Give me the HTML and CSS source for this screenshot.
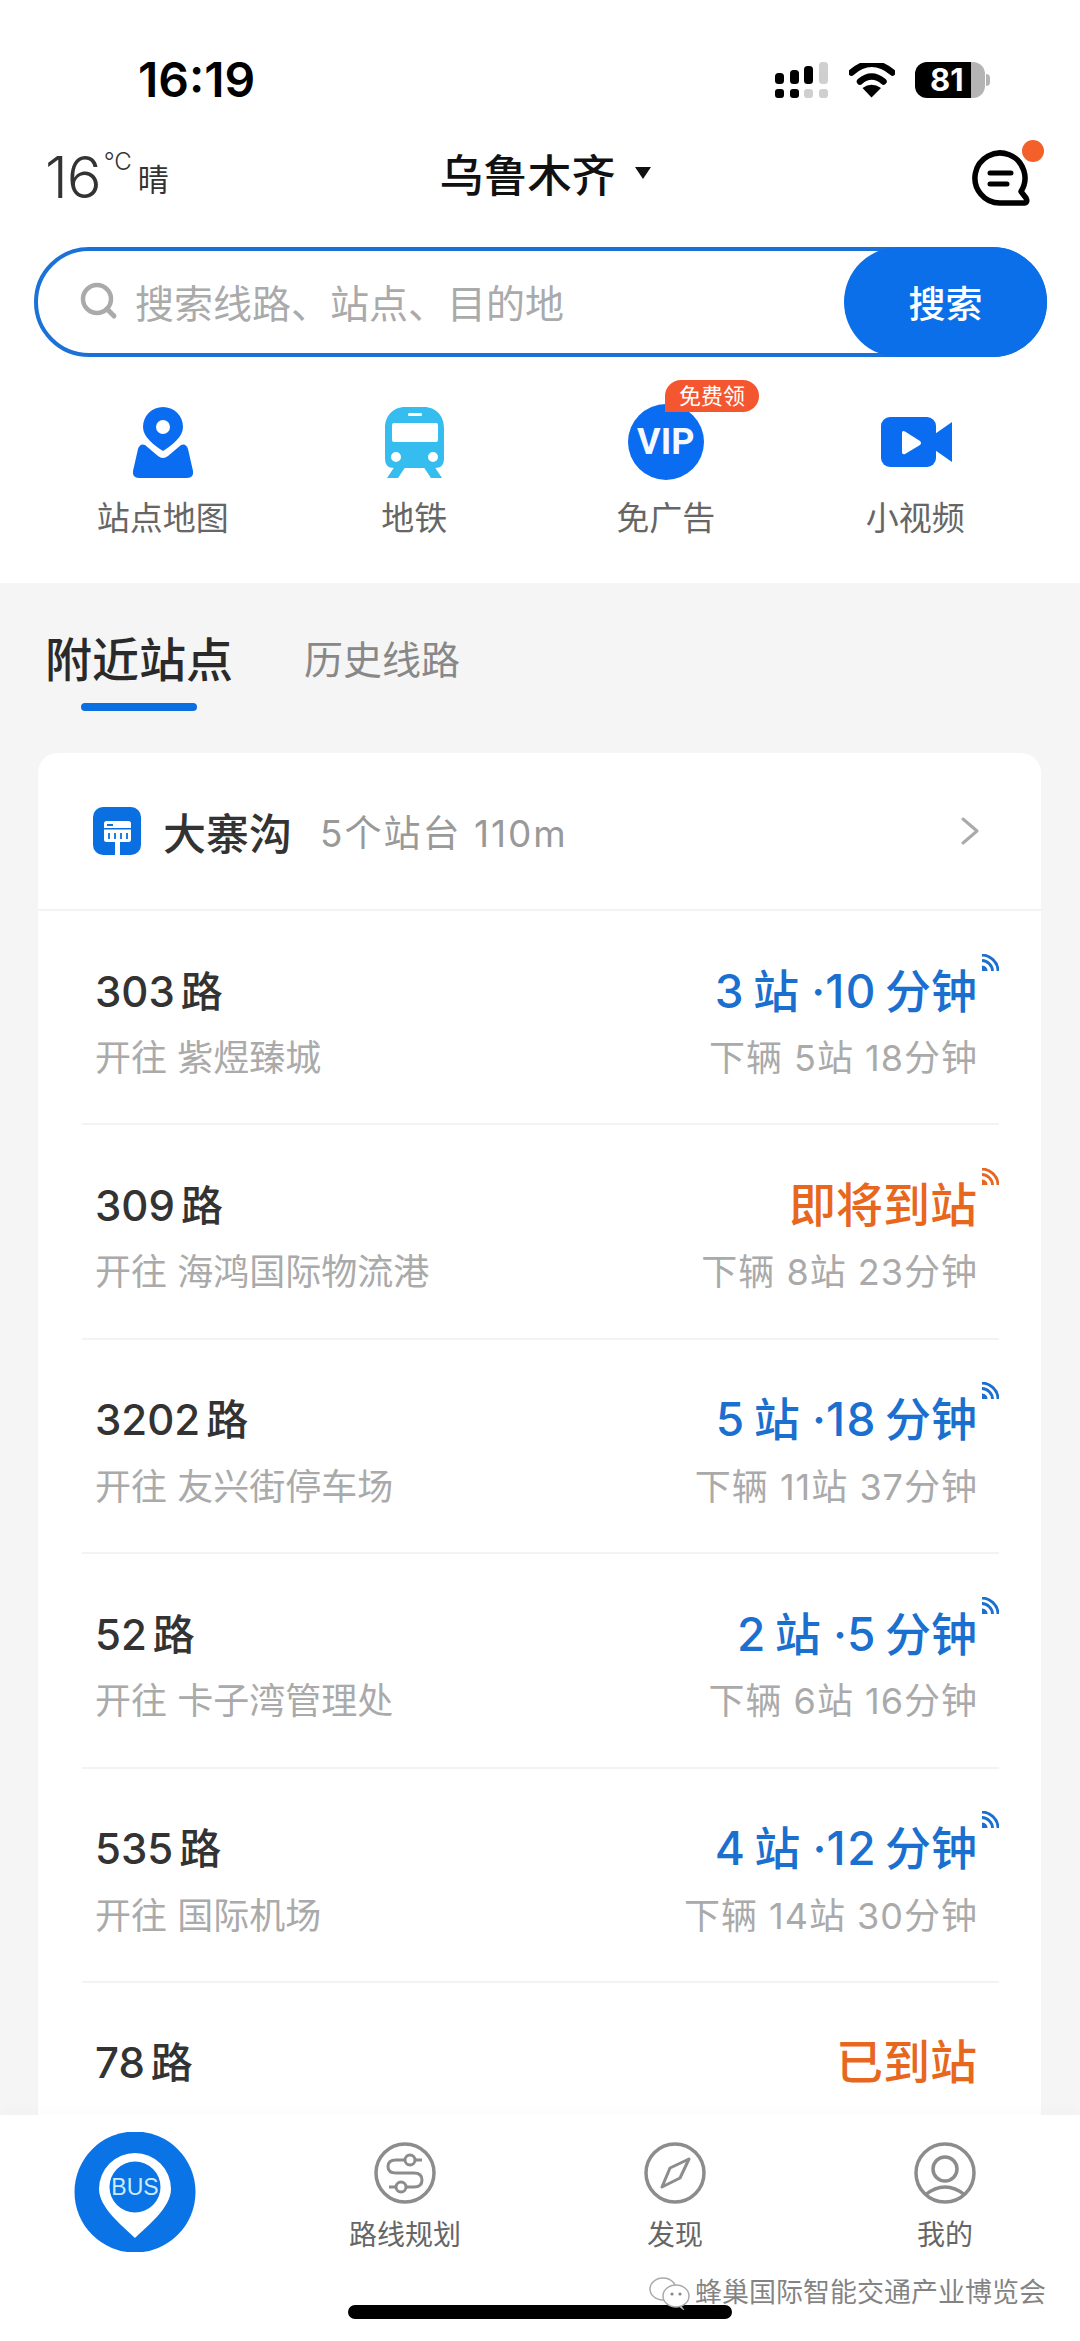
FILE: index.html
```html
<!DOCTYPE html>
<html lang="zh-CN">
<head>
<meta charset="utf-8">
<title>公交</title>
<link rel="stylesheet" href="styles.css">
</head>
<body>
<div class="screen">
  <div class="status">
    <span class="time">16:19</span>
    <div class="status-icons">
      <svg class="sig" viewBox="775 61 54 38" width="54" height="38">
        <g fill="#000">
          <rect x="775" y="73" width="9" height="11" rx="3.5"/><rect x="790" y="70" width="9" height="14" rx="3.5"/><rect x="804" y="66" width="9" height="18" rx="3.5"/>
          <rect x="775" y="89" width="9" height="9" rx="3"/><rect x="790" y="89" width="9" height="9" rx="3"/>
        </g>
        <g fill="#cfcfcf">
          <rect x="819" y="62" width="9" height="22" rx="3.5"/><rect x="804" y="89" width="9" height="9" rx="3"/><rect x="819" y="89" width="9" height="9" rx="3"/>
        </g>
      </svg>
      <svg class="wifi" viewBox="849 63 46 35" width="46" height="35">
        <path d="M851.500 72.500Q871.500 55 892.500 72.500M860 81.500Q871.500 71.500 883.500 81.500" fill="none" stroke="#000" stroke-width="6.500" stroke-linecap="round"/>
        <path d="M871.500 97.500L862.500 88Q871.500 81.500 881 88Z" fill="#000"/>
      </svg>
      <div class="battery"><span class="batt-num">81</span></div>
    </div>
  </div>

  <div class="topbar">
    <div class="weather"><span class="temp">16</span><span class="deg">°C</span><span class="sky">晴</span></div>
    <div class="city"><span>乌鲁木齐</span><i class="caret"></i></div>
    <div class="msg">
      <svg viewBox="970 136 75 70" width="75" height="70">
        <path d="M1000 200A25 25 0 1 1 1021 188.500L1026 195Q1028.500 200 1023 200Z" fill="none" stroke="#000" stroke-width="5.500" stroke-linejoin="round"/>
        <path d="M990 170H1011M990 181H1007" stroke="#000" stroke-width="5" stroke-linecap="round"/>
        <circle cx="1033" cy="148" r="11" fill="#f4602a"/>
      </svg>
    </div>
  </div>

  <div class="search">
    <div class="search-field">
      <svg viewBox="0 0 40 40" width="40" height="40">
        <circle cx="18" cy="18" r="14" fill="none" stroke="#aaa" stroke-width="4.500"/>
        <path d="M28 28L35 35" stroke="#aaa" stroke-width="5" stroke-linecap="round"/>
      </svg>
      <span>搜索线路、站点、目的地</span>
    </div>
    <div class="search-btn">搜索</div>
  </div>

  <div class="nav">
    <div class="nav-item">
      <svg viewBox="123 404 80 80" width="80" height="80">
        <path fill="#0a6cf0" fill-rule="evenodd" d="M163 407A20 20 0 0 1 183 427C183 437 172 445 163 451C154 445 143 437 143 427A20 20 0 0 1 163 407ZM163 420A7 7 0 1 0 163 434A7 7 0 1 0 163 420Z"/>
        <path fill="#0a6cf0" d="M145 445L158 456Q163 460 168 456L181 445Q186 443 188 449L193 471Q194 478 187 478H139Q132 478 133 471L138 449Q140 443 145 445Z"/>
      </svg>
      <span class="nav-label">站点地图</span>
    </div>
    <div class="nav-item">
      <svg viewBox="373 404 80 80" width="80" height="80">
        <path fill="#35bdf0" fill-rule="evenodd" d="M404 407H423C435 407 443 416 443 428V459Q443 468 434 468H393Q384 468 384 459V428C384 416 392 407 404 407ZM393 423Q391 423 391 425V440Q391 442 393 442H435Q437 442 437 440V425Q437 423 435 423ZM408 413Q407 413 407 414.500Q407 416 408 416H420Q421 416 421 414.500Q421 413 420 413ZM395 452A5 5 0 1 0 395 462A5 5 0 1 0 395 452ZM432 452A5 5 0 1 0 432 462A5 5 0 1 0 432 452Z"/>
        <path fill="#35bdf0" d="M394 466H405L397 478H386ZM433 466H422L430 478H441Z"/>
      </svg>
      <span class="nav-label">地铁</span>
    </div>
    <div class="nav-item">
      <div class="vip">VIP</div>
      <span class="badge">免费领</span>
      <span class="nav-label">免广告</span>
    </div>
    <div class="nav-item">
      <svg viewBox="877 404 80 80" width="80" height="80">
        <rect x="881" y="417" width="55" height="50" rx="9" fill="#0a6cf0"/>
        <path d="M932 436L952 422V462L932 448Z" fill="#0a6cf0"/>
        <path d="M902 433Q902 430 905 431.500L920 441Q922 443 920 445L905 454Q902 455 902 452Z" fill="#fff"/>
      </svg>
      <span class="nav-label nudge">小视频</span>
    </div>
  </div>

  <div class="main">
    <div class="tabs">
      <div class="tab active">附近站点</div>
      <div class="tab">历史线路</div>
    </div>

    <div class="card">
      <div class="stop-head">
        <svg viewBox="93 808 48 48" width="48" height="48">
          <rect x="93" y="808" width="48" height="48" rx="10" fill="#0a6fe0"/>
          <rect x="104" y="822" width="27" height="21" rx="2.500" fill="#fff"/>
          <rect x="115" y="843" width="5" height="13" fill="#fff"/>
          <rect x="104" y="829" width="27" height="1.500" fill="#0a6fe0"/>
          <rect x="107" y="825" width="6" height="2" fill="#0a6fe0"/>
          <path d="M109 834V840M115 834V840M121 834V840M127 834V840" stroke="#0a6fe0" stroke-width="1.800"/>
        </svg>
        <span class="stop-name">大寨沟</span>
        <span class="stop-meta">5个站台 110m</span>
        <svg class="chev" viewBox="0 0 20 30" width="20" height="30">
          <path d="M3 3L17 15L3 27" fill="none" stroke="#aaa" stroke-width="3" stroke-linecap="round" stroke-linejoin="round"/>
        </svg>
      </div>

      <div class="row">
        <div class="line-main">
          <span class="route"><span class="n">303</span>路</span>
          <span class="eta blue"><span class="n">3</span>站 <span class="dot">·</span><span class="n">10</span>分钟<svg class="rss" viewBox="0 0 18 18" width="18" height="18"><path d="M1 1C9 1 17 8 17 17M1 6.500C6.500 6.500 11.500 11.500 11.500 17" fill="none" stroke="currentColor" stroke-width="2.800"/><path d="M1 11.500Q6.500 12 6.500 17H1Z" fill="currentColor"/></svg></span>
        </div>
        <div class="line-sub"><span>开往 紫煜臻城</span><span class="next">下辆 5站 18分钟</span></div>
      </div>
      <div class="row">
        <div class="line-main">
          <span class="route"><span class="n">309</span>路</span>
          <span class="eta orange">即将到站<svg class="rss" viewBox="0 0 18 18" width="18" height="18"><path d="M1 1C9 1 17 8 17 17M1 6.500C6.500 6.500 11.500 11.500 11.500 17" fill="none" stroke="currentColor" stroke-width="2.800"/><path d="M1 11.500Q6.500 12 6.500 17H1Z" fill="currentColor"/></svg></span>
        </div>
        <div class="line-sub"><span>开往 海鸿国际物流港</span><span class="next">下辆 8站 23分钟</span></div>
      </div>
      <div class="row">
        <div class="line-main">
          <span class="route"><span class="n">3202</span>路</span>
          <span class="eta blue"><span class="n">5</span>站 <span class="dot">·</span><span class="n">18</span>分钟<svg class="rss" viewBox="0 0 18 18" width="18" height="18"><path d="M1 1C9 1 17 8 17 17M1 6.500C6.500 6.500 11.500 11.500 11.500 17" fill="none" stroke="currentColor" stroke-width="2.800"/><path d="M1 11.500Q6.500 12 6.500 17H1Z" fill="currentColor"/></svg></span>
        </div>
        <div class="line-sub"><span>开往 友兴街停车场</span><span class="next">下辆 11站 37分钟</span></div>
      </div>
      <div class="row">
        <div class="line-main">
          <span class="route"><span class="n">52</span>路</span>
          <span class="eta blue"><span class="n">2</span>站 <span class="dot">·</span><span class="n">5</span>分钟<svg class="rss" viewBox="0 0 18 18" width="18" height="18"><path d="M1 1C9 1 17 8 17 17M1 6.500C6.500 6.500 11.500 11.500 11.500 17" fill="none" stroke="currentColor" stroke-width="2.800"/><path d="M1 11.500Q6.500 12 6.500 17H1Z" fill="currentColor"/></svg></span>
        </div>
        <div class="line-sub"><span>开往 卡子湾管理处</span><span class="next">下辆 6站 16分钟</span></div>
      </div>
      <div class="row">
        <div class="line-main">
          <span class="route"><span class="n">535</span>路</span>
          <span class="eta blue"><span class="n">4</span>站 <span class="dot">·</span><span class="n">12</span>分钟<svg class="rss" viewBox="0 0 18 18" width="18" height="18"><path d="M1 1C9 1 17 8 17 17M1 6.500C6.500 6.500 11.500 11.500 11.500 17" fill="none" stroke="currentColor" stroke-width="2.800"/><path d="M1 11.500Q6.500 12 6.500 17H1Z" fill="currentColor"/></svg></span>
        </div>
        <div class="line-sub"><span>开往 国际机场</span><span class="next">下辆 14站 30分钟</span></div>
      </div>
      <div class="row">
        <div class="line-main">
          <span class="route"><span class="n">78</span>路</span>
          <span class="eta orange">已到站</span>
        </div>
      </div>
    </div>
  </div>

  <div class="tabbar">
    <div class="tb-item tb-home">
      <svg viewBox="74 2132 122 120" width="122" height="120">
        <circle cx="135" cy="2192" r="60.500" fill="#0a73e6"/>
        <path d="M135 2153A36 36 0 0 1 171 2189C171 2208 147 2226 135 2238C123 2226 99 2208 99 2189A36 36 0 0 1 135 2153Z" fill="#fff"/>
        <circle cx="135" cy="2187" r="25.500" fill="#0a73e6"/>
        <text x="135" y="2195" class="bus-text" text-anchor="middle">BUS</text>
      </svg>
    </div>
    <div class="tb-item">
      <svg viewBox="373 2141 64 64" width="64" height="64" fill="none" stroke="#8c8c8c" stroke-width="3.500">
        <circle cx="405" cy="2173" r="29"/>
        <path d="M422 2160H396Q388 2160 388 2166.500Q388 2173 396 2173H414Q422 2173 422 2180Q422 2187 414 2187H389" stroke-width="3"/>
        <circle cx="410" cy="2160" r="5" fill="#fff" stroke-width="3"/>
        <circle cx="401" cy="2187" r="5" fill="#fff" stroke-width="3"/>
      </svg>
      <span class="tb-label">路线规划</span>
    </div>
    <div class="tb-item">
      <svg viewBox="643 2141 64 64" width="64" height="64" fill="none" stroke="#8c8c8c" stroke-width="3.500">
        <circle cx="675" cy="2173" r="29"/>
        <path d="M689 2159L680 2178L662 2187L670 2168Z" stroke-width="3" stroke-linejoin="round"/>
      </svg>
      <span class="tb-label">发现</span>
    </div>
    <div class="tb-item">
      <svg viewBox="913 2141 64 64" width="64" height="64" fill="none" stroke="#8c8c8c" stroke-width="3.500">
        <circle cx="945" cy="2173" r="29"/>
        <circle cx="945" cy="2169" r="12"/>
        <path d="M925 2195Q945 2179 965 2195"/>
      </svg>
      <span class="tb-label">我的</span>
    </div>
    <div class="home-bar"></div>
    <div class="watermark">
      <svg viewBox="0 0 44 34" width="44" height="34">
        <ellipse cx="16" cy="13" rx="13" ry="11" fill="#fff" stroke="#aaa" stroke-width="1.500"/>
        <ellipse cx="29" cy="20" rx="13" ry="11" fill="#fff" stroke="#aaa" stroke-width="1.500"/>
        <path d="M34 30L37 34L33 31Z" fill="#fff" stroke="#aaa"/>
        <circle cx="25" cy="18" r="1.600" fill="#888"/><circle cx="33" cy="18" r="1.600" fill="#888"/>
      </svg>
      <span>蜂巢国际智能交通产业博览会</span>
    </div>
  </div>
</div>
</body>
</html>
```
FILE: styles.css
```css
* { box-sizing: border-box; }
html, body { margin: 0; padding: 0; }
body {
  font-family: Inter, "Noto Sans CJK SC", sans-serif;
  background: #fff;
}
.screen {
  position: relative;
  width: 1080px;
  height: 2341px;
  overflow: hidden;
  background: #fff;
}
svg { display: block; flex: none; }

/* status bar */
.status {
  height: 124px;
  padding: 36px 90px 0 138px;
  display: flex;
  justify-content: space-between;
  align-items: center;
}
.time { font-size: 48px; font-weight: 600; color: #000; line-height: 88px; }
.status-icons { display: flex; align-items: center; }
.wifi { margin-left: 20px; }
.battery {
  position: relative;
  margin-left: 20px;
  margin-right: 5px;
  width: 70px;
  height: 36px;
  border-radius: 12px;
  background: linear-gradient(90deg, #000 0 80%, #b4b4b4 80% 100%);
  display: flex;
  align-items: center;
  padding-left: 15px;
}
.battery::after {
  content: "";
  position: absolute;
  right: -5px;
  top: 12px;
  width: 4px;
  height: 12px;
  border-radius: 0 4px 4px 0;
  background: #b4b4b4;
}
.batt-num { color: #fff; font-size: 31px; font-weight: 700; line-height: 36px; }

/* top bar */
.topbar {
  position: relative;
  height: 106px;
  padding: 0 45px;
  display: flex;
  align-items: center;
  justify-content: space-between;
}
.weather { display: flex; align-items: flex-start; height: 60px; color: #333; }
.temp { font-size: 58px; font-weight: 300; line-height: 60px; letter-spacing: -1px; }
.deg { font-size: 24px; font-weight: 300; line-height: 26px; margin: 2px 0 0 3px; }
.sky { font-size: 31px; line-height: 34px; margin: 16px 0 0 6px; }
.city { display: flex; align-items: center; font-size: 44px; font-weight: 500; color: #111; margin: 0 0 8px -48px; }
.caret {
  width: 0; height: 0;
  margin-left: 20px;
  border-left: 8px solid transparent;
  border-right: 8px solid transparent;
  border-top: 12px solid #111;
}
.msg { margin-right: -10px; margin-top: -7px; }

/* search */
.search {
  margin: 17px 33px 0 34px;
  height: 110px;
  border: 4px solid #1a72d8;
  border-radius: 55px;
  display: flex;
  align-items: center;
  justify-content: space-between;
  position: relative;
}
.search-field {
  display: flex;
  align-items: center;
  padding: 0 0 2px 41px;
  gap: 16px;
  font-size: 39px;
  color: #aaa;
}
.search-btn {
  width: 203px;
  height: 110px;
  margin: -4px;
  border-radius: 55px;
  background: #0a6fe8;
  color: #fff;
  font-size: 37px;
  font-weight: 500;
  display: flex;
  align-items: center;
  justify-content: center;
}

/* quick nav */
.nav {
  height: 226px;
  padding: 47px 37px 0 37px;
  display: grid;
  grid-template-columns: repeat(4, 1fr);
}
.nav-item {
  position: relative;
  display: flex;
  flex-direction: column;
  align-items: center;
}
.nav-label { margin-top: 16px; font-size: 33px; line-height: 36px; color: #666; }
.nav-label.nudge { margin-right: 4px; }
.vip {
  width: 76px;
  height: 76px;
  margin: 0 0 4px;
  border-radius: 50%;
  background: #0a6cf0;
  color: #f4f9ff;
  font-family: Roboto, sans-serif;
  font-size: 36px;
  font-weight: 700;
  line-height: 76px;
  text-align: center;
}
.badge {
  position: absolute;
  left: 125px;
  top: -24px;
  width: 94px;
  height: 32px;
  border-radius: 16px 16px 16px 0;
  background: #f4572f;
  color: #fff;
  font-size: 22px;
  line-height: 32px;
  text-align: center;
}

/* main */
.main { background: #f5f5f5; height: 1532px; }
.tabs {
  height: 170px;
  padding: 54px 0 0 45px;
  display: flex;
  align-items: flex-start;
  gap: 71px;
}
.tab { font-size: 39px; line-height: 46px; color: #888; }
.tab.active {
  display: flex;
  flex-direction: column;
  align-items: center;
  font-size: 47px;
  font-weight: 500;
  color: #2a2a2a;
}
.tab.active::after {
  content: "";
  width: 116px;
  height: 8px;
  margin-top: 20px;
  border-radius: 4px;
  background: #0a6fe0;
}
.card {
  margin: 0 39px 0 38px;
  background: #fff;
  border-radius: 20px 20px 0 0;
}
.stop-head {
  height: 158px;
  padding: 0 61px 0 55px;
  display: flex;
  align-items: center;
  border-bottom: 2px solid #f3f3f3;
}
.stop-name { margin-left: 22px; font-size: 43px; font-weight: 500; color: #333; }
.stop-meta { margin-left: 28px; font-size: 37px; color: #999; letter-spacing: 2px; }
.chev { margin-left: auto; }

.row {
  height: 214.4px;
  margin: 0 42px 0 44px;
  padding: 53px 22px 0 13px;
  border-bottom: 2px solid #f3f3f3;
}
.row:last-child { border-bottom: 0; }
.line-main, .line-sub { display: flex; justify-content: space-between; }
.line-main { height: 56px; align-items: center; }
.line-sub { margin-top: 16px; font-size: 36px; line-height: 44px; color: #aaa; }
.next { letter-spacing: 1px; margin-right: -1px; }
.route { font-size: 42px; font-weight: 500; color: #333; margin-bottom: 8px; }
.n { margin-right: 6px; }
.eta { position: relative; font-size: 47px; font-weight: 500; line-height: 56px; margin-bottom: 3px; }
.blue { color: #1a6fcf; font-size: 46px; }
.blue .n { margin-right: 8px; letter-spacing: 1.5px; }
.orange { color: #e8671e; }
.rss { position: absolute; right: -22px; top: -9px; }

/* tab bar */
.tabbar {
  position: absolute;
  left: 0;
  right: 0;
  bottom: 0;
  height: 226px;
  background: #fff;
  display: grid;
  grid-template-columns: repeat(4, 1fr);
  align-items: start;
  box-shadow: 0 -8px 10px rgba(0, 0, 0, 0.012);
}
.tb-item {
  display: flex;
  flex-direction: column;
  align-items: center;
  padding-top: 26px;
}
.tb-home { padding-top: 17px; }
.tb-label { margin-top: 12px; font-size: 28px; line-height: 36px; color: #666; }
.bus-text { font-family: "Liberation Sans", sans-serif; font-size: 23px; fill: #cdeaff; }
.home-bar {
  position: absolute;
  left: 348px;
  top: 190px;
  width: 384px;
  height: 14px;
  border-radius: 7px;
  background: #000;
}
.watermark {
  position: absolute;
  left: 647px;
  top: 161px;
  display: flex;
  align-items: center;
  gap: 4px;
  font-size: 27px;
  line-height: 34px;
  color: rgba(90, 90, 90, 0.75);
  text-shadow: 0 0 2px #fff;
  white-space: nowrap;
}
```
